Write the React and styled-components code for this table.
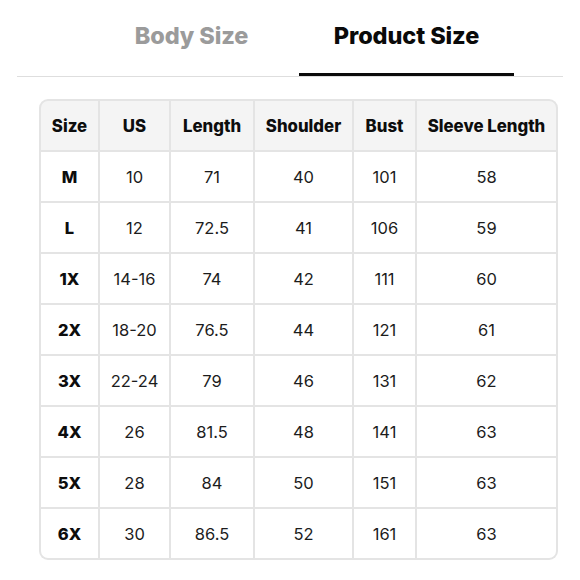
import React from "react";
import styled, { createGlobalStyle } from "styled-components";

const Global = createGlobalStyle`
  html, body { margin: 0; padding: 0; background: #fff; }
  body { font-family: Inter, "Noto Sans", "Liberation Sans", sans-serif; color: #111; }
`;

const Page = styled.div`
  width: 580px;
  padding-bottom: 20px;
`;

const TabBar = styled.div`
  margin: 0 17px;
  height: 76px;
  border-bottom: 1px solid #dedede;
  display: flex;
  padding-left: 67px;
`;

const Tab = styled.div`
  width: 215px;
  height: 76px;
  display: flex;
  align-items: center;
  justify-content: center;
  padding-bottom: 5px;
  box-sizing: border-box;
  font-size: 23.5px;
  font-weight: 800;
  letter-spacing: -0.1px;
  color: ${(p) => (p.$active ? "#0a0a0a" : "#9b9b9b")};
  box-shadow: ${(p) => (p.$active ? "inset 0 -3px 0 #0a0a0a" : "none")};
`;

const Grid = styled.div`
  margin: 22px 0 0 39px;
  width: 519px;
  box-sizing: border-box;
  display: grid;
  grid-template-columns: 57px 69px 82px 97px 61px 139px;
  grid-auto-rows: 49px;
  gap: 2px;
  padding: 2px;
  background: #e4e4e4;
  border-radius: 9px;
  overflow: hidden;
`;

const Cell = styled.div`
  display: flex;
  align-items: center;
  justify-content: center;
  background: ${(p) => (p.$head ? "#f4f4f4" : "#fff")};
  font-size: ${(p) => (p.$head ? "16.8px" : "16.5px")};
  font-weight: ${(p) => (p.$bold ? 800 : 400)};
  color: ${(p) => (p.$bold ? "#0d0d0d" : "#1c1c1c")};
  white-space: nowrap;
  ${(p) => p.$corner || ""}
`;

const headers = ["Size", "US", "Length", "Shoulder", "Bust", "Sleeve Length"];
const rows = [
  ["M", "10", "71", "40", "101", "58"],
  ["L", "12", "72.5", "41", "106", "59"],
  ["1X", "14-16", "74", "42", "111", "60"],
  ["2X", "18-20", "76.5", "44", "121", "61"],
  ["3X", "22-24", "79", "46", "131", "62"],
  ["4X", "26", "81.5", "48", "141", "63"],
  ["5X", "28", "84", "50", "151", "63"],
  ["6X", "30", "86.5", "52", "161", "63"],
];

const cornerFor = (r, c, last) => {
  if (r === 0 && c === 0) return "border-top-left-radius: 7px;";
  if (r === 0 && c === 5) return "border-top-right-radius: 7px;";
  if (r === last && c === 0) return "border-bottom-left-radius: 7px;";
  if (r === last && c === 5) return "border-bottom-right-radius: 7px;";
  return "";
};

export default function App() {
  const last = rows.length;
  return (
    <Page>
      <Global />
      <TabBar>
        <Tab>Body Size</Tab>
        <Tab $active>Product Size</Tab>
      </TabBar>
      <Grid>
        {headers.map((h, c) => (
          <Cell key={h} $head $bold $corner={cornerFor(0, c, last)}>
            {h}
          </Cell>
        ))}
        {rows.map((row, r) =>
          row.map((v, c) => (
            <Cell key={r + "-" + c} $bold={c === 0} $corner={cornerFor(r + 1, c, last)}>
              {v}
            </Cell>
          ))
        )}
      </Grid>
    </Page>
  );
}
